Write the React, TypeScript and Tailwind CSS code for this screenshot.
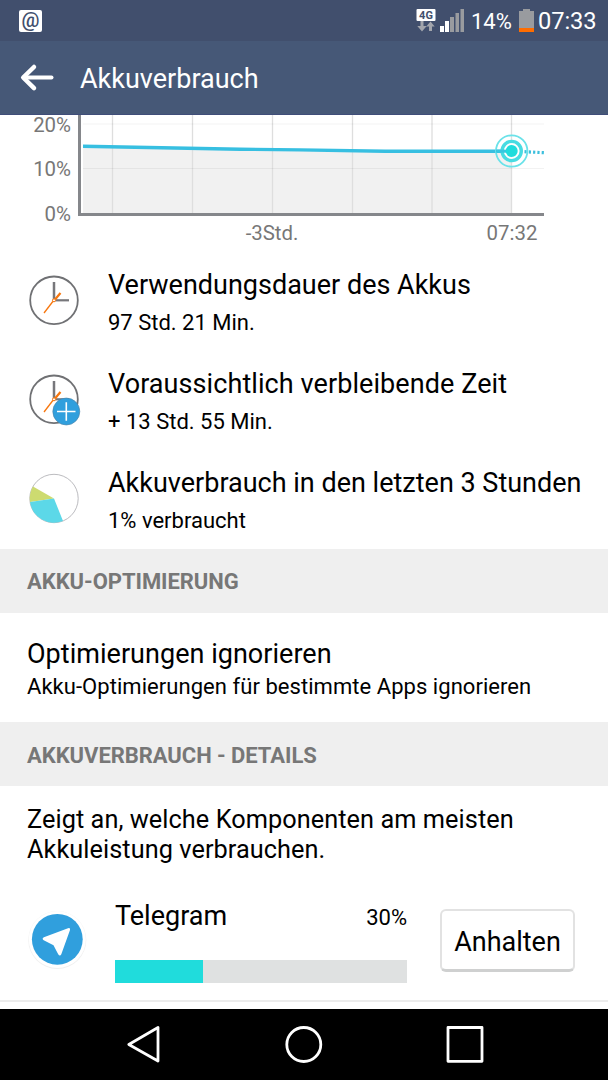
import type { ReactNode } from "react";

function StatusBar() {
  return (
    <div className="flex h-[41px] items-center bg-[#414f6d] text-white">
      <div className="ml-[19px] flex h-[22px] w-[23px] items-center justify-center rounded-[2px] bg-white">
        <span className="-mt-px text-[20px] leading-[20px] font-medium text-[#414f6d]">@</span>
      </div>
      <svg className="ml-[374px] h-[41px] w-12" viewBox="416 0 48 41">
        <rect x="416.500" y="9" width="19" height="12" rx="1" fill="#fff" />
        <text x="426" y="19" textAnchor="middle" fontSize="11" fontWeight="700" fill="#414f6d" textLength="14">4G</text>
        <path d="M420.500 21h3v5h3.200l-4.700 5.500-4.700-5.500h3.200zM429 31h3v-4.500h2.700l-4.200-5-4.200 5h2.700z" fill="#a2a5ac" />
        <rect x="440" y="26" width="4" height="6" fill="#fff" />
        <rect x="445" y="21" width="4" height="11" fill="#fff" />
        <rect x="450" y="17" width="4" height="15" fill="#999b9f" />
        <rect x="455.500" y="13" width="3.500" height="19" fill="#999b9f" />
        <rect x="460.500" y="9" width="3.500" height="23" fill="#999b9f" />
      </svg>
      <span className="ml-[7px] w-[48px] pt-px text-[22px] leading-[41px]">14%</span>
      <svg className="h-[41px] w-[15px]" viewBox="519 0 15 41">
        <path d="M519 11h4V9h7v2h4v17h-15z" fill="#999b9f" />
        <rect x="519" y="28" width="15" height="4" fill="#ff6d00" />
      </svg>
      <span className="ml-[4px] pt-[2px] text-[23.700px] leading-[41px] tracking-[-0.1px]">07:33</span>
    </div>
  );
}

function TitleBar() {
  return (
    <div className="flex h-[74px] items-center border-b border-[#3f4d79] bg-[#465877]">
      <svg className="h-[74px] w-[60px]" viewBox="0 41 60 74" fill="none" stroke="#fff" strokeLinecap="round" strokeLinejoin="round">
        <path d="M24 77.500H51.500" strokeWidth="4" />
        <path d="M34 67L23.200 77.500 34 88.200" strokeWidth="4.500" />
      </svg>
      <h1 className="ml-[20px] pt-[3px] text-[27px] leading-8 text-white">Akkuverbrauch</h1>
    </div>
  );
}

function BatteryChart() {
  const columns = [112.5, 192.5, 272.5, 352.5, 432, 511.5];
  return (
    <svg className="block h-[135px] w-[608px] shrink-0" viewBox="0 115 608 135">
      <path d="M83 147L390 151H512V213H83z" fill="#f1f1f1" />
      {columns.map((x) => (
        <path key={x} d={`M${x} 115V213`} stroke="#dedede" strokeWidth="1.300" />
      ))}
      <path d="M83 124H544M83 168.500H544" stroke="#000" strokeOpacity=".05" strokeWidth="1.200" />
      <path d="M79.500 115V214.500H544" fill="none" stroke="#85878b" strokeWidth="3" />
      <path d="M83 146.200L240 149.200 300 149.900 385 151.200H512" fill="none" stroke="#37bfe1" strokeWidth="3.400" />
      <path d="M524.500 151.700L544 152.700" stroke="#3cbfdd" strokeWidth="3.200" strokeDasharray="2.200 2.100" />
      <circle cx="511.700" cy="151" r="15.700" fill="none" stroke="#6be2e9" strokeWidth="1.800" />
      <circle cx="511.700" cy="151" r="9.600" fill="#fff" fillOpacity=".85" stroke="#48dce2" strokeWidth="3.400" />
      <path d="M496 151.200H512" stroke="#37c6e0" strokeWidth="3" />
      <circle cx="511.700" cy="151" r="6" fill="#20dcdc" />
      <g fill="#777" fontSize="20.400">
        <text x="71" y="132.300" textAnchor="end">20%</text>
        <text x="71" y="176.300" textAnchor="end">10%</text>
        <text x="71" y="221" textAnchor="end">0%</text>
        <text x="272" y="240" textAnchor="middle">-3Std.</text>
        <text x="512" y="240" textAnchor="middle">07:32</text>
      </g>
    </svg>
  );
}

function ClockIcon({ plus = false }: { plus?: boolean }) {
  return (
    <svg className="h-[56px] w-[56px]" viewBox="0 0 56 56" fill="none">
      <circle cx="28" cy="28.300" r="23.800" stroke="#707174" strokeWidth="1.800" />
      <path d="M28 10V28.500" stroke="#77777b" strokeWidth="2.500" />
      <path d="M28 28.300H43" stroke="#77777b" strokeWidth="2.200" />
      <path d="M34.500 21L29 27.500" stroke="#f7760d" strokeWidth="2.200" />
      <path d="M28 28L18 41" stroke="#f7760d" strokeWidth="1.300" />
      <circle cx="28" cy="28.300" r="1.500" fill="#fff" stroke="#f7760d" />
      {plus && (
        <>
          <circle cx="40.300" cy="40.500" r="13.500" fill="#309fdd" stroke="#4d81a5" strokeWidth=".6" />
          <path d="M31 40.500H49.500M40.300 31.200V49.700" stroke="#fff" strokeWidth="1.600" />
        </>
      )}
    </svg>
  );
}

function PieIcon() {
  return (
    <svg className="h-[56px] w-[56px]" viewBox="0 0 56 56">
      <circle cx="28" cy="28.500" r="24.200" fill="#fff" stroke="#aaaaae" strokeWidth=".8" />
      <path d="M28 28.500L7 16.500A24.200 24.200 0 0 0 4 32z" fill="#cddb70" />
      <path d="M28 28.500L4 32A24.200 24.200 0 0 0 37 51z" fill="#5cd8e8" />
    </svg>
  );
}

function InfoRow({ icon, title, detail, tracking = "tracking-normal" }: { icon: ReactNode; title: string; detail: string; tracking?: string }) {
  return (
    <div className="flex h-[99px] pl-[26px]">
      <div className="w-[82px] pt-[22px]">{icon}</div>
      <div className="pt-[19px] whitespace-nowrap">
        <div className={`text-[27px] leading-8 ${tracking}`}>{title}</div>
        <div className="mt-[9px] text-[22px] leading-[26px]">{detail}</div>
      </div>
    </div>
  );
}

function SectionHeader({ children }: { children: ReactNode }) {
  return (
    <h2 className="flex h-16 shrink-0 items-center bg-[#efefef] pl-[27px] text-[22px] font-bold tracking-[-0.05px] text-[#777]">
      {children}
    </h2>
  );
}

function TelegramIcon() {
  return (
    <svg className="h-[60px] w-[60px]" viewBox="27 909 60 60">
      <circle cx="57.300" cy="940" r="29" fill="#f0f0f0" />
      <circle cx="57.300" cy="939.500" r="28.500" fill="#fff" />
      <circle cx="57.300" cy="939.300" r="25.400" fill="#309fdd" />
      <path d="M43.900 937.300L68 928.200Q70.600 927.500 70 930L61.300 954.200Q60 957 58.200 954.200L53.500 945.300 43.700 940.300Q41.500 938.500 43.900 937.300z" fill="#fff" />
    </svg>
  );
}

function NavBar() {
  return (
    <div className="h-[71px] shrink-0 bg-black">
      <svg className="block h-[71px] w-[608px]" viewBox="0 1009 608 71" fill="none" stroke="#fff" strokeWidth="2.800" strokeLinejoin="round">
        <path d="M158 1027.500V1061L128.800 1044.500z" />
        <circle cx="303.800" cy="1044.500" r="17" />
        <rect x="448" y="1027.500" width="34" height="33.800" />
      </svg>
    </div>
  );
}

export default function App() {
  return (
    <div className="flex h-[1080px] w-[608px] flex-col overflow-hidden bg-white font-['Roboto',sans-serif] text-black">
      <StatusBar />
      <TitleBar />
      <BatteryChart />
      <div className="h-[299px] shrink-0">
        <InfoRow icon={<ClockIcon />} title="Verwendungsdauer des Akkus" detail="97 Std. 21 Min." />
        <InfoRow
          icon={<ClockIcon plus />}
          title="Voraussichtlich verbleibende Zeit"
          detail="+ 13 Std. 55 Min."
          tracking="tracking-[0.08px]"
        />
        <InfoRow icon={<PieIcon />} title="Akkuverbrauch in den letzten 3 Stunden" detail="1% verbraucht" />
      </div>
      <SectionHeader>
        <span className="pt-px">AKKU-OPTIMIERUNG</span>
      </SectionHeader>
      <div className="h-[109px] shrink-0 pt-[25px] pl-[27px] whitespace-nowrap">
        <div className="text-[27px] leading-8 tracking-[0.03px]">Optimierungen ignorieren</div>
        <div className="mt-[4px] text-[22px] leading-[26px] tracking-[0.05px]">Akku-Optimierungen für bestimmte Apps ignorieren</div>
      </div>
      <SectionHeader>
        <span className="pt-[3px]">AKKUVERBRAUCH - DETAILS</span>
      </SectionHeader>
      <p className="h-[97px] shrink-0 pt-[19px] pl-[27px] text-[25.300px] leading-[30px] tracking-[0.06px]">
        Zeigt an, welche Komponenten am meisten
        <br />
        Akkuleistung verbrauchen.
      </p>
      <div className="flex h-[119px] shrink-0 border-b-2 border-[#ececec] pl-[27px]">
        <div className="w-[88px] pt-[26px]">
          <TelegramIcon />
        </div>
        <div className="w-[292px] pt-[17px]">
          <div className="flex h-[60px] items-baseline justify-between">
            <span className="text-[27px] leading-8">Telegram</span>
            <span className="text-[22px] leading-[26px]">30%</span>
          </div>
          <div className="h-[23px] bg-[#dfe1e1]">
            <div className="h-full w-[88px] bg-[#20dcdc]" />
          </div>
        </div>
        <button className="mt-[26px] ml-[33px] h-[63px] w-[135px] rounded-[6px] border-2 border-b-[3px] border-[#e2e2e2] border-b-[#cfd0d0] bg-white pt-[5px] text-[27px]">
          Anhalten
        </button>
      </div>
      <div className="h-[7px] shrink-0" />
      <NavBar />
    </div>
  );
}
